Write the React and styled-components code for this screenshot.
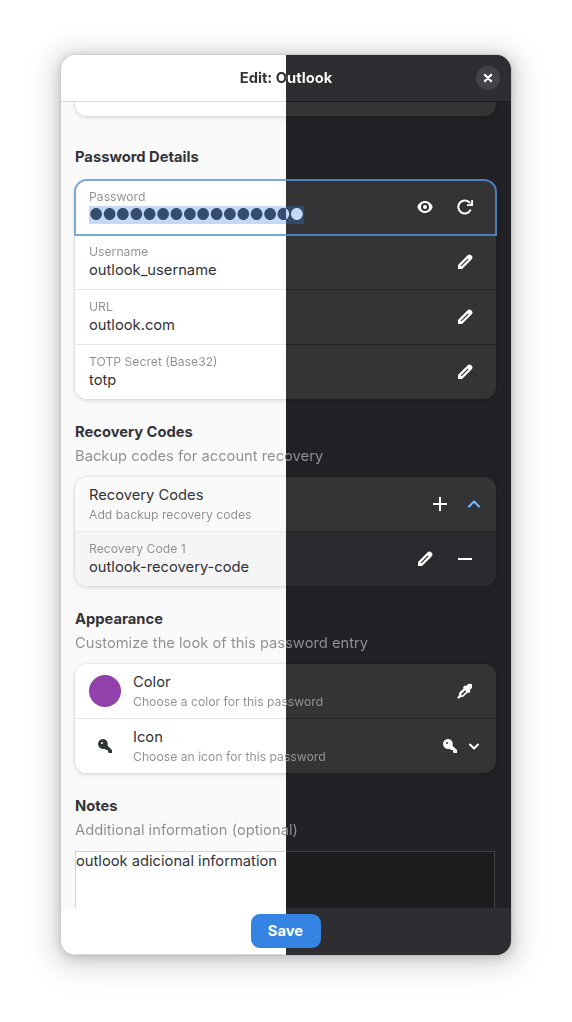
import React from "react";
import styled, { createGlobalStyle, css } from "styled-components";

/* Light tone on the left half of the window, dark tone on the right half. */
const split = (light, dark) =>
  `linear-gradient(90deg, ${light} 50%, ${dark} 50%) fixed`;

const GlobalStyle = createGlobalStyle`
  *, *::before, *::after { box-sizing: border-box; }
  body {
    margin: 0;
    background: #fff;
    font-family: Inter, "Liberation Sans", sans-serif;
    font-size: 14.72px;
    line-height: 18px;
    color: #333338;
  }
`;

const Page = styled.main`
  width: 572px;
  height: 1022px;
  padding: 55px 61px 67px;
  overflow: hidden;
`;

const Dialog = styled.section`
  width: 450px;
  height: 900px;
  display: flex;
  flex-direction: column;
  overflow: hidden;
  border-radius: 15px;
  background: ${split("#fafafb", "#222226")};
  box-shadow: 0 0 0 1px rgba(0, 0, 0, 0.05), 0 2px 8px 2px rgba(0, 0, 0, 0.13),
    0 3px 20px 10px rgba(0, 0, 0, 0.09), 0 6px 32px 16px rgba(0, 0, 0, 0.04);
`;

const Header = styled.header`
  flex: none;
  height: 47px;
  padding: 0 11px 1px;
  display: grid;
  grid-template-columns: 24px 1fr 24px;
  align-items: center;
  text-align: center;
  background: ${split("#ffffff", "#2e2e32")};
  position: relative;
  &::after {
    content: "";
    position: absolute;
    inset: auto 0 0;
    height: 1px;
    background: ${split("#dcdcde", "#1e1e21")};
  }
`;

const clipText = (light, dark) => css`
  background: ${split(light, dark)};
  -webkit-background-clip: text;
  background-clip: text;
  color: transparent;
`;

const Title = styled.h1`
  margin: 0;
  font-size: 14.72px;
  font-weight: 700;
  grid-column: 2;
  ${clipText("#333338", "#ffffff")}
`;

const CloseButton = styled.button`
  width: 24px;
  height: 24px;
  padding: 4px;
  border: 0;
  border-radius: 50%;
  display: flex;
  color: #fff;
  background: #434347;
`;

const Content = styled.div`
  flex: 1;
  min-height: 0;
  overflow: hidden;
  padding: 0 15px 0 14px;
`;

const Card = styled.div`
  display: flex;
  flex-direction: column;
  border-radius: 12px;
  background: ${(p) => split(p.$soft ? "#fafafb" : "#ffffff", "#343437")};
  box-shadow: 0 0 0 1px rgba(0, 0, 6, 0.03), 0 1px 3px 1px rgba(0, 0, 6, 0.07),
    0 2px 6px 2px rgba(0, 0, 6, 0.03);
`;

const PreviousCard = styled(Card)`
  height: 14px;
  border-radius: 0 0 12px 12px;
`;

const Group = styled.section`
  padding-top: ${(p) => p.$top || 24}px;
`;

const GroupTitle = styled.h2`
  margin: 0 0 ${(p) => (p.$alone ? 14 : 6)}px;
  font-size: 14.72px;
  line-height: 18px;
  font-weight: 700;
`;

const GroupText = styled.p`
  margin: 0 0 12px;
  white-space: nowrap;
  ${clipText("#8f8f91", "#929295")}
`;

const Separator = styled.div`
  height: 1px;
  background: ${split("#e8e8e9", "#222226")};
`;

const Row = styled.div`
  height: 54px;
  padding: 0 14px;
  display: flex;
  align-items: center;
  position: relative;
  ${(p) =>
    p.$nested &&
    css`
      background: ${split("#f5f5f6", "#2b2b2f")};
      border-radius: 0 0 12px 12px;
    `}
  ${(p) =>
    p.$focused &&
    css`
      &::before {
        content: "";
        position: absolute;
        inset: -1px -1px -2px;
        border: 2px solid transparent;
        border-radius: 13px 13px 0 0;
        background: linear-gradient(90deg, #fff 50%, #343437 50%) fixed padding-box,
          linear-gradient(90deg, #78a8dc 50%, #4f7dba 50%) fixed border-box;
      }
    `}
`;

const RowText = styled.div`
  flex: 1;
  min-width: 0;
  display: flex;
  flex-direction: column;
  align-items: flex-start;
  position: relative;
  gap: ${(p) => (p.$entry ? 2 : 3)}px;
  padding-bottom: ${(p) => (p.$entry ? 1 : 0)}px;
  white-space: nowrap;
`;

const Small = styled.span`
  font-size: 12.2px;
  line-height: 15px;
  ${clipText("#8f8f91", "#98989b")}
`;

const Value = styled.span`
  line-height: 18px;
`;

const Selection = styled.span`
  height: 18px;
  background: ${split("#c3d9f5", "#334b6b")};
`;

const Dots = styled.span`
  display: block;
  width: 215px;
  overflow: hidden;
  font-size: 15.6px;
  letter-spacing: -0.87px;
  line-height: 18px;
  ${clipText("#334c6f", "#c3d9f6")}
`;

const Actions = styled.div`
  display: flex;
  align-items: center;
  gap: ${(p) => p.$gap ?? 6}px;
  color: #fff;
  position: relative;
`;

const IconButton = styled.button`
  width: 34px;
  height: 34px;
  padding: 9px;
  border: 0;
  background: transparent;
  color: inherit;
  display: flex;
`;

const Prefix = styled.div`
  width: 32px;
  height: 32px;
  margin-right: 12px;
  border-radius: 50%;
  display: flex;
  align-items: center;
  justify-content: center;
  background: ${(p) => p.$color || "transparent"};
  color: #2e3436;
`;

const Svg = styled.svg`
  display: block;
  flex: none;
  width: 16px;
  height: 16px;
  color: ${(p) => p.$color || "inherit"};
`;

const NotesBox = styled.div`
  width: 420px;
  height: 90px;
  padding: 1px;
  background: ${split("#d5d5d6", "#424244")};
`;

const NotesText = styled.div`
  height: 100%;
  background: ${split("#ffffff", "#1d1d1f")};
`;

const Footer = styled.footer`
  flex: none;
  height: 47px;
  display: flex;
  justify-content: center;
  padding-top: 6px;
  background: ${split("#ffffff", "#2e2e32")};
  position: relative;
  &::after {
    content: "";
    position: absolute;
    inset: auto 0 0;
    height: 1px;
    background: ${split("#dedede", "#2e2e32")};
  }
`;

const SaveButton = styled.button`
  width: 70px;
  height: 34px;
  padding: 0 1px 0 0;
  border: 0;
  border-radius: 9px;
  background: #3584e4;
  color: #fff;
  font: 700 14.72px/18px Inter, sans-serif;
`;

const shapes = {
  close: <path d="M4.8 4.8l6.4 6.4M11.2 4.8l-6.4 6.4" fill="none" stroke="currentColor" strokeWidth="2.200" strokeLinecap="round" />,
  eye: <path fillRule="evenodd" d="M8 2C4.6 2 1.700 4.400.5 7.500c-.1.300-.1.700 0 1C1.700 11.600 4.600 14 8 14s6.300-2.400 7.500-5.500c.1-.3.1-.7 0-1C14.300 4.400 11.400 2 8 2zM8 4a4 4 0 1 1 0 8 4 4 0 0 1 0-8zM8 6a2 2 0 1 0 0 4 2 2 0 0 0 0-4z" />,
  refresh: (
    <>
      <path d="M13.700 10.700A6.500 6.500 0 1 1 12.900 3.900" fill="none" stroke="currentColor" strokeWidth="2" />
      <path d="M16 1v6h-6V5.200h2.900L14.200 3.500V1z" />
    </>
  ),
  pencil: <path fillRule="evenodd" d="M1 15v-4L10.400 1.600a2.900 2.900 0 0 1 4.100 0 2.800 2.800 0 0 1 0 4L5 15zM3.700 11.400l.9.900 7-7-.9-.9z" />,
  plus: <path d="M7 1h2v6h6v2H9v6H7V9H1V7h6z" />,
  minus: <path d="M1 7h14v2H1z" />,
  up: <path d="M3 10.500l5-5 5 5" fill="none" stroke="currentColor" strokeWidth="2" strokeLinecap="round" strokeLinejoin="round" />,
  down: <path d="M4 6.500l4 4 4-4" fill="none" stroke="currentColor" strokeWidth="2" strokeLinecap="round" strokeLinejoin="round" />,
  key: <path fillRule="evenodd" d="M6 1a5 5 0 1 0 1.700 9.700L9 12h2v2l1 1h3v-3l-4.400-4.300A5 5 0 0 0 6 1zM5 4a1 1 0 1 1 0 2 1 1 0 0 1 0-2z" />,
  picker: <path fillRule="evenodd" d="M10.500 1.600c.8-.8 1.600-.9 2.500-.6h2v2c.3 1 0 1.900-.8 2.700L12.800 7l.7 1.300-1.600 1.700-1.200-.5-4.500 4.300-2.700.5L2 15.500c-.9.500-1.900-.5-1.400-1.400l1.200-1.500.4-2.800 4.400-4.400L6 4.200l1.700-1.700L9.200 3.100zM8 7.200l-3.700 3.700v1.300h1.200l3.800-3.700z" />,
};

const Icon = ({ name, color }) => (
  <Svg viewBox="0 0 16 16" fill="currentColor" $color={color} aria-hidden="true">
    {shapes[name]}
  </Svg>
);

const Action = ({ icon, label }) => (
  <IconButton aria-label={label}>
    <Icon name={icon} />
  </IconButton>
);

const EntryRow = ({ label, value, nested, children }) => (
  <Row $nested={nested}>
    <RowText $entry>
      <Small>{label}</Small>
      <Value>{value}</Value>
    </RowText>
    <Actions>{children}</Actions>
  </Row>
);

export default function App() {
  return (
    <Page>
      <GlobalStyle />
      <Dialog>
        <Header>
          <Title>Edit: Outlook</Title>
          <CloseButton aria-label="Close">
            <Icon name="close" />
          </CloseButton>
        </Header>
        <Content>
          <PreviousCard />
          <Group $top={32}>
            <GroupTitle $alone>Password Details</GroupTitle>
            <Card>
              <Row $focused>
                <RowText $entry>
                  <Small>Password</Small>
                  <Selection>
                    <Dots>{"●".repeat(16)}</Dots>
                  </Selection>
                </RowText>
                <Actions>
                  <Action icon="eye" label="Show" />
                  <Action icon="refresh" label="Generate" />
                </Actions>
              </Row>
              <Separator />
              <EntryRow label="Username" value="outlook_username">
                <Action icon="pencil" label="Edit" />
              </EntryRow>
              <Separator />
              <EntryRow label="URL" value="outlook.com">
                <Action icon="pencil" label="Edit" />
              </EntryRow>
              <Separator />
              <EntryRow label="TOTP Secret (Base32)" value="totp">
                <Action icon="pencil" label="Edit" />
              </EntryRow>
            </Card>
          </Group>
          <Group>
            <GroupTitle>Recovery Codes</GroupTitle>
            <GroupText>Backup codes for account recovery</GroupText>
            <Card $soft>
              <Row>
                <RowText>
                  <Value>Recovery Codes</Value>
                  <Small>Add backup recovery codes</Small>
                </RowText>
                <Actions $gap={9}>
                  <Action icon="plus" label="Add" />
                  <Icon name="up" color="#78baff" />
                </Actions>
              </Row>
              <Separator />
              <EntryRow nested label="Recovery Code 1" value="outlook-recovery-code">
                <Action icon="pencil" label="Edit" />
                <Action icon="minus" label="Remove" />
              </EntryRow>
            </Card>
          </Group>
          <Group>
            <GroupTitle>Appearance</GroupTitle>
            <GroupText>Customize the look of this password entry</GroupText>
            <Card>
              <Row>
                <Prefix $color="#9141ac" />
                <RowText>
                  <Value>Color</Value>
                  <Small>Choose a color for this password</Small>
                </RowText>
                <Actions>
                  <Action icon="picker" label="Pick color" />
                </Actions>
              </Row>
              <Separator />
              <Row>
                <Prefix>
                  <Icon name="key" />
                </Prefix>
                <RowText>
                  <Value>Icon</Value>
                  <Small>Choose an icon for this password</Small>
                </RowText>
                <Actions $gap={8}>
                  <Icon name="key" />
                  <Icon name="down" />
                </Actions>
              </Row>
            </Card>
          </Group>
          <Group>
            <GroupTitle>Notes</GroupTitle>
            <GroupText>Additional information (optional)</GroupText>
            <NotesBox>
              <NotesText>outlook adicional information</NotesText>
            </NotesBox>
          </Group>
        </Content>
        <Footer>
          <SaveButton>Save</SaveButton>
        </Footer>
      </Dialog>
    </Page>
  );
}
